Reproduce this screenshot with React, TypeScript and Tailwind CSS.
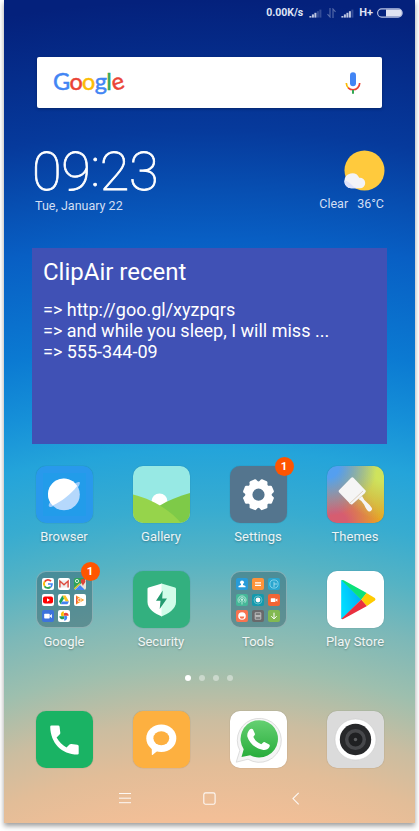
import type { ReactNode } from "react";

const BOX = "h-[57px] w-[57px] shrink-0 rounded-[10px] overflow-hidden shadow-[0_0_1px_rgba(0,0,0,0.35)]";

function Signal({ bright }: { bright: number }) {
  return (
    <svg width="13" height="9" viewBox="0 0 13 9" fill="#dfe4f5">
      {[0, 1, 2, 3, 4].map((i) => (
        <rect key={i} x={0.4 + i * 2.5} y={7 - i * 1.6} width="2" height={1.6 + i * 1.6} opacity={i < bright ? 0.85 : 0.22} />
      ))}
    </svg>
  );
}

function StatusBar() {
  return (
    <div className="flex h-[26px] items-center justify-end pr-[12px] text-[#dfe4f5]">
      <span className="mr-[6px] text-[10.5px] font-bold leading-[26px]">0.00K/s</span>
      <Signal bright={3} />
      <svg className="mx-[5px]" width="9" height="10" viewBox="0 0 9 10" fill="none" stroke="#dfe4f5" strokeWidth="1.1" opacity="0.38">
        <path d="M3 0v9L0.5 6.2M6 10V1l2.5 2.8" />
      </svg>
      <Signal bright={4} />
      <span className="ml-[5px] mr-[4px] text-[11px] font-bold leading-[26px]">H+</span>
      <svg width="26" height="10" viewBox="0 0 26 10">
        <rect x="0.6" y="0.9" width="24.6" height="8.2" rx="4.1" fill="none" stroke="#b9c3e4" strokeWidth="1.1" />
        <path d="M9 1.6h12.5a3.3 3.3 0 0 1 0 6.8H9z" fill="#dfe2f1" />
      </svg>
    </div>
  );
}

function SearchBar() {
  return (
    <div className="ml-[33px] mt-[31px] flex h-[51px] w-[345px] items-center justify-between rounded-[2px] bg-white pl-[16px] pr-[21px] shadow-[0_1px_3px_rgba(0,0,0,0.3)]">
      <div className="mb-[3px] flex h-[48px] items-center font-[Lato] text-[23.5px] font-normal leading-[48px] tracking-[-0.7px] [-webkit-text-stroke:0.5px_currentColor]">
        <span className="text-[#4285f4]">G</span>
        <span className="text-[#ea4335]">o</span>
        <span className="text-[#fbbc05]">o</span>
        <span className="text-[#4285f4]">g</span>
        <span className="text-[#34a853]">l</span>
        <span className="h-[20px] -rotate-[18deg] leading-[20px] text-[#ea4335]">e</span>
      </div>
      <svg width="16" height="22" viewBox="0 0 16 22" fill="none">
        <rect x="5" y="0.3" width="6" height="14" rx="3" fill="#4285f4" />
        <path d="M1.3 11c.1 2.3.9 4 2.3 5.2" stroke="#fbbc05" strokeWidth="1.7" />
        <path d="M3.2 15.8c2.7 2.6 7 2.6 9.5 0 1.3-1.3 2-2.8 2-4.8" stroke="#ea4335" strokeWidth="1.7" />
        <path d="M8 17.9v3.8" stroke="#34a853" strokeWidth="2" />
      </svg>
    </div>
  );
}

function ClockRow() {
  return (
    <div className="flex h-[140px] justify-between pl-[28px] pr-[30px] pt-[39px] text-white">
      <div className="flex flex-col">
        <div className="flex h-[49px] whitespace-nowrap text-[54px] font-thin leading-[49px] tracking-[-0.3px] [-webkit-text-stroke:0.8px_white]">
          <span>09</span>
          <span className="-mt-[4px]">:</span>
          <span>23</span>
        </div>
        <span className="ml-[3px] mt-px text-[12.5px] leading-[18px] text-[#d3dff3]">Tue, January 22</span>
      </div>
      <div className="flex flex-col items-end">
        <svg className="mt-[3px]" width="41" height="41" viewBox="0 0 41 41">
          <circle cx="20.5" cy="20.5" r="20" fill="#ffca3d" />
          <path d="M0.4 31a7.8 7.8 0 0 1 14.8-3.2 5.3 5.3 0 0 1 6 5.2 5.2 5.2 0 0 1-5.2 5.3H7A6.9 6.9 0 0 1 .4 31z" fill="#f3f3f7" />
          <path d="M.5 30.5a7 7 0 0 0 6.8 7.8h6.2C8 37.5 7 31.5.5 30.5z" fill="#dfe3fa" />
        </svg>
        <div className="mr-px mt-[4px] flex gap-[9px] text-[12.5px] leading-[18px] text-[#d3dff3]">
          <span>Clear</span>
          <span>36°C</span>
        </div>
      </div>
    </div>
  );
}

function ClipWidget() {
  return (
    <div className="ml-[28px] h-[196px] w-[355px] bg-[#4051b5] pl-[11px] pt-[10px] text-white">
      <h1 className="text-[24px] leading-[28px]">ClipAir recent</h1>
      <ul className="mt-[13px] text-[18px] leading-[21px]">
        <li>=&gt; http://goo.gl/xyzpqrs</li>
        <li>=&gt; and while you sleep, I will miss ...</li>
        <li>=&gt; 555-344-09</li>
      </ul>
    </div>
  );
}

function Shortcut({ label, badge, children }: { label?: string; badge?: string; children: ReactNode }) {
  return (
    <div className="relative flex w-[97px] flex-col items-center">
      {children}
      {label && (
        <span className="mt-[5px] whitespace-nowrap text-[13px] leading-[18px] text-white/90 [text-shadow:0_1px_2px_rgba(0,0,0,0.3)]">
          {label}
        </span>
      )}
      {badge && (
        <span className="absolute left-[65px] top-[-9px] flex h-[19px] w-[19px] items-center justify-center rounded-full bg-[#ff5500] text-[11.5px] font-bold leading-none text-white">
          {badge}
        </span>
      )}
    </div>
  );
}

function BrowserIcon() {
  return (
    <svg className={BOX} viewBox="0 0 57 57">
      <rect width="57" height="57" fill="#2999ec" />
      <rect x="7" y="7" width="43" height="43" fill="#229cea" />
      <path d="M14.5 35.5c-1.6 2.2-2.2 4-1.5 5 .6.9 2.6.5 5-.8zM39 17.5c2-1.2 4-1.8 4.7-1.2.8 1-.7 4-2.9 6.6z" fill="#9bcbfa" />
      <circle cx="28" cy="28.5" r="15.8" fill="#b5d8fc" />
      <path d="M16.700 39.500A15.800 15.800 0 1 1 41.200 19.900C34.500 28.500 26 35 16.700 39.500z" fill="#fff" />
    </svg>
  );
}

function GalleryIcon() {
  return (
    <svg className={BOX} viewBox="0 0 57 57">
      <rect width="57" height="57" fill="#97e9e4" />
      <circle cx="26.5" cy="35.5" r="8" fill="#fff" />
      <path d="M57 27C46 30 36 34 26 40v17h31z" fill="#7eca48" />
      <path d="M0 28.5C19 33 37 44 48 57H0z" fill="#96d44b" />
    </svg>
  );
}

function SettingsIcon() {
  return (
    <svg className={BOX} viewBox="0 0 57 57">
      <rect width="57" height="57" fill="#54758e" />
      <g transform="translate(28.5 28.7)">
        {[0, 1, 2, 3, 4, 5, 6, 7].map((i) => (
          <path key={i} transform={`rotate(${22.5 + i * 45})`} d="M-5.500-10l2-4.900q.3-.7 1-.7h5q.7 0 1 .7l2 4.900z" fill="#fff" />
        ))}
        <circle r="9.6" fill="none" stroke="#fff" strokeWidth="7" />
      </g>
    </svg>
  );
}

function ThemesIcon() {
  return (
    <div className={`${BOX} bg-[radial-gradient(circle_at_0%_0%,#549ff0_15%,transparent_62%),radial-gradient(circle_at_100%_12%,#cfe35c_12%,transparent_62%),radial-gradient(circle_at_15%_100%,#d65d70_15%,transparent_60%),linear-gradient(#c3a44c,#eaa51f)]`}>
      <svg width="57" height="57" viewBox="0 0 57 57" fill="#f5f5f5">
        <path d="M24.2 11.7q1.3-1 2.5.2L39 25l-1.2 2.2L25 38.400q-1.1.3-1.9-.6L12 26.300q-1-1.1.2-2.200z" />
        <path d="M31.500 33L35 30q2 4.500 5.500 7 2.700 2.200 4 4.500a2.500 2.500 0 0 1-4.200 2.800Q38.500 42 37 38.500 35.500 35 31.500 33z" />
        <path d="M22.5 37.600L36 25" stroke="#dccfbe" strokeWidth="1" />
      </svg>
    </div>
  );
}

function Mini({ bg, children }: { bg: string; children: ReactNode }) {
  return (
    <svg className="h-[12px] w-[12px] rounded-[2px]" viewBox="0 0 12 12" fill="none">
      <rect width="12" height="12" fill={bg} />
      {children}
    </svg>
  );
}

function Folder({ children }: { children: ReactNode }) {
  return (
    <div className="grid h-[57px] w-[57px] shrink-0 grid-cols-[12px_12px_12px] grid-rows-[12px_12px_12px] gap-[4px] rounded-[10px] border border-white/30 bg-[#3b666e]/50 pl-[5px] pt-[6px]">
      {children}
    </div>
  );
}

function GoogleFolder() {
  return (
    <Folder>
      <Mini bg="#fff">
        <path d="M2.6 3.7A4 4 0 0 1 9 3.2" stroke="#ea4335" strokeWidth="1.8" />
        <path d="M2.6 8.1a4.2 4.2 0 0 1 0-4.5" stroke="#fbbc05" strokeWidth="1.8" />
        <path d="M2.5 8.2a4 4 0 0 0 6 .8" stroke="#34a853" strokeWidth="1.8" />
        <path d="M6 6h4q0 2-1.4 3.2" stroke="#4285f4" strokeWidth="1.7" />
      </Mini>
      <Mini bg="#fff">
        <rect x="1.5" y="2.5" width="9" height="7" fill="#eee" />
        <path d="M1.9 9.5V3l4.1 3.8L10.1 3v6.5" stroke="#dd4b3e" strokeWidth="1.4" />
      </Mini>
      <Mini bg="#2ea35a">
        <path d="M0 12L12 1v11z" fill="#e9e4d8" />
        <path d="M1 12l5-5 5 5z" fill="#4285f4" />
        <path d="M0 11l6-5.500" stroke="#f4c734" strokeWidth="1.2" />
        <circle cx="3" cy="3" r="1.6" stroke="#fff" strokeWidth=".8" />
        <path d="M9 8C8 5 6.800 5 6.800 3a2.300 2.300 0 0 1 4.600 0C11.400 5 10 5 9 8z" fill="#dc4437" />
      </Mini>
      <Mini bg="#fff">
        <rect x="1" y="2.4" width="10" height="7.2" rx="2" fill="#f00" />
        <path d="M5 4.3v3.4L8 6z" fill="#fff" />
      </Mini>
      <Mini bg="#fff">
        <path d="M4.3 1.5h3.2L11 7.5H7.700z" fill="#fbc322" />
        <path d="M4.3 1.5L6 4.5 2.600 10.200 1 7.500z" fill="#17a261" />
        <path d="M4.3 7.5H11l-1.6 2.800H2.600z" fill="#4382f1" />
      </Mini>
      <Mini bg="#fff">
        <path d="M2 1.5l8.3 4.4L2 10.6z" fill="#fb9b25" />
        <path d="M2 1.5l2.3 4.4L2 10.6z" fill="#f05537" />
        <circle cx="5.4" cy="6" r="1.7" stroke="#fff" strokeWidth=".8" />
      </Mini>
      <Mini bg="#3d73dc">
        <rect x="2.2" y="3.7" width="5.5" height="4.8" rx=".7" fill="#fff" />
        <path d="M7.5 6l2.4-2v4.3z" fill="#fff" />
      </Mini>
      <Mini bg="#fff">
        <path d="M5.8 6V1.3a3 3 0 0 0-2.4 4.7z" fill="#fbbc05" />
        <path d="M6 5.8h4.7A3 3 0 0 0 6 3.3z" fill="#ea4335" />
        <path d="M6.2 6v4.7A3 3 0 0 0 8.700 6z" fill="#4285f4" />
        <path d="M6 6.2H1.3A3 3 0 0 0 6 8.7z" fill="#249b57" />
      </Mini>
    </Folder>
  );
}

function ToolsFolder() {
  return (
    <Folder>
      <Mini bg="#289bd9">
        <circle cx="6" cy="4.3" r="1.9" fill="#fff" />
        <path d="M5 5h2v2l2.5 1v1.3h-7V8L5 7z" fill="#fff" />
      </Mini>
      <Mini bg="#ff933a">
        <path d="M3 4.8h6M3 7.4h6" stroke="#fff" strokeWidth="1.2" />
      </Mini>
      <Mini bg="#2aa6cf">
        <circle cx="6" cy="6" r="4.1" stroke="#93dcf2" strokeWidth=".8" />
        <path d="M6 3.8V6h3M6 6v3" stroke="#c3ecf7" strokeWidth=".7" />
      </Mini>
      <Mini bg="#46b899">
        <path d="M3.3 8.9a4 4 0 1 1 5.5-.1M4.5 8a2.5 2.5 0 1 1 3.2-.1M6 6v4.5" stroke="#c9f0e3" strokeWidth=".8" />
        <circle cx="6" cy="5.7" r="1.1" fill="#c9f0e3" />
      </Mini>
      <Mini bg="#139aad">
        <circle cx="6" cy="6" r="4" stroke="#85cbd3" strokeWidth=".7" />
        <circle cx="6" cy="6" r="2.4" fill="#fff" />
      </Mini>
      <Mini bg="#f46534">
        <rect x="2.8" y="4.2" width="4.6" height="3.7" rx=".5" fill="#fff" />
        <path d="M7.2 6l2.2-1.6v3.300z" fill="#fff" />
      </Mini>
      <Mini bg="#f87350">
        <circle cx="6" cy="6" r="3.8" fill="#fff" />
        <path d="M3.7 6.5h4.6a2.3 2.3 0 0 1-4.6 0z" fill="#f87350" />
      </Mini>
      <Mini bg="#68696b">
        <path d="M3.2 2.8h5.6v2.5H3.200zM3.200 6.800h5.600v2.400H3.200zM2.500 6h7" stroke="#ddd" strokeWidth=".7" />
      </Mini>
      <Mini bg="#82b951">
        <path d="M6 2.7v6M3.3 6.2L6 8.9l2.7-2.7" stroke="#fff" strokeWidth="1" />
      </Mini>
    </Folder>
  );
}

function SecurityIcon() {
  return (
    <svg className={BOX} viewBox="0 0 57 57">
      <rect width="57" height="57" fill="#33b07f" />
      <path d="M29 12.5L15.600 16.600q-1.100.4-1.100 1.500V31c0 7 7 11.500 14.500 14.500z" fill="#fff" />
      <path d="M28.500 12.500L42 16.600q1 .4 1 1.500V31c0 7-7.500 11.500-14.500 14.500z" fill="#d1fce9" />
      <path d="M29.7 19.5L23 29.800h4.500l-.8 8.200L34 27.500h-4.800z" fill="#249b70" />
    </svg>
  );
}

function PlayIcon() {
  return (
    <svg className={BOX} viewBox="0 0 57 57">
      <defs>
        <linearGradient id="playBlue" x1="1" y1="0" x2="0" y2="0.5">
          <stop offset="0" stopColor="#00a5f5" />
          <stop offset="1" stopColor="#00dcff" />
        </linearGradient>
      </defs>
      <rect width="57" height="57" fill="#fff" />
      <path d="M14.2 9.5v38q0 .7.5.5L34.300 28.600 14.800 9z" fill="url(#playBlue)" />
      <path d="M14.5 9.3q.9-.8 2.200 0l23 12.700-5.500 6.700z" fill="#0be17a" />
      <path d="M14.5 47.8q.9.8 2.200 0L40 35l-5.700-6.400z" fill="#e9303f" />
      <path d="M39.5 22l8.300 4.900q1.500 1.200 0 2.600L40 35l-5.800-6.400z" fill="#ffcb02" />
    </svg>
  );
}

function PhoneIcon() {
  return (
    <svg className={BOX} viewBox="0 0 57 57">
      <rect width="57" height="57" fill="#1ab364" />
      <path d="M15.500 14.500h6.700q1.200 0 1.400 1.200l.7 6q.1 1.100-.7 1.900L20.600 26.500c2.400 4.400 5.700 7.600 9.900 10.100l3-3q.8-.8 1.900-.6l5.900.7q1.400.2 1.400 1.500v7.300q0 1.100-1.200 1.100C25.500 43.500 14.500 32 14.200 15.800q0-1.300 1.300-1.300z" fill="#fff" />
    </svg>
  );
}

function MessageIcon() {
  return (
    <svg className={BOX} viewBox="0 0 57 57">
      <rect width="57" height="57" fill="#fdb040" />
      <ellipse cx="28.300" cy="27.300" rx="15" ry="13.800" fill="#fff" />
      <path d="M17.500 34l1.300 4.500v5q.1 1 1 .3l6-5z" fill="#fff" />
      <ellipse cx="28.300" cy="27.300" rx="7.900" ry="7" fill="#fdb040" />
    </svg>
  );
}

function WhatsAppIcon() {
  return (
    <svg className={BOX} viewBox="0 0 57 57">
      <defs>
        <linearGradient id="waGreen" x1="0" y1="0" x2="0" y2="1">
          <stop offset="0" stopColor="#65d072" />
          <stop offset="1" stopColor="#28ad3b" />
        </linearGradient>
      </defs>
      <rect width="57" height="57" fill="#fff" />
      <path d="M6.200 51.200l3.600-11.700A22 22 0 1 1 18 48.200z" fill="#f5f5f5" stroke="#d6d6d6" strokeWidth=".8" />
      <path d="M11.500 46l2.200-7.800a18.700 18.700 0 1 1 6.500 6z" fill="url(#waGreen)" />
      <path d="M20 18.300c1-1 2.600-.8 3 .2l1.900 4.300c.5 1.200-1.800 2.600-1.500 3.300 1.500 3.200 4.300 5.700 7.500 7 1.100.4 2.400-2.600 3.500-2.100l4.800 2.400c.8.500.7 1.400.2 2.600-1 2.200-3.800 3.200-6 2.900-8.500-1.400-14.200-7.200-16-13.200-.6-2.700.8-5.700 2.600-7.400z" fill="#fff" />
    </svg>
  );
}

function CameraIcon() {
  return (
    <svg className={BOX} viewBox="0 0 57 57">
      <rect width="57" height="57" fill="#dbdbdb" />
      <circle cx="28.5" cy="28.5" r="20.5" fill="#fff" stroke="#cfcfcf" strokeWidth=".6" />
      <circle cx="28.5" cy="28.5" r="15.7" fill="#27282a" />
      <circle cx="28.5" cy="28.5" r="8.8" fill="#1f2022" stroke="#47484b" strokeWidth="3.5" />
      <circle cx="28.5" cy="28.5" r="1.7" fill="#5b5c5e" />
    </svg>
  );
}

function NavBar() {
  return (
    <div className="mt-[22px] flex h-[16px] items-center pl-[115px] text-white/90">
      <svg width="12" height="12" viewBox="0 0 12 12" stroke="currentColor" strokeWidth="1">
        <path d="M0 1.5h12M0 6.2h12M0 10.7h12" />
      </svg>
      <svg className="ml-[72px]" width="13" height="13" viewBox="0 0 13 13" fill="none" stroke="currentColor" strokeWidth="1.1">
        <rect x="0.8" y="0.9" width="11.3" height="11.3" rx="1.8" />
      </svg>
      <svg className="ml-[76px]" width="8" height="13" viewBox="0 0 8 13" fill="none" stroke="currentColor" strokeWidth="1.1">
        <path d="M6.7 0.9L1 6.6l5.7 5.7" />
      </svg>
    </div>
  );
}

export default function App() {
  return (
    <div className="h-[831px] w-[419px] overflow-hidden bg-white pl-[4px] font-[Roboto,sans-serif]">
      <main className="flex h-[823px] w-[411px] flex-col bg-[radial-gradient(circle_at_50%_1300px,#f3bf97_480px,#e2bd98_535px,#cbbda0_580px,#9dbfae_635px,#7cb8b8_690px,#55b3c4_740px,#38acd0_790px,#24a4da_850px,#1690d8_900px,#0b7ad2_960px,#085fc4_1060px,#074fb2_1110px,#063a9c_1170px,#04217c_1300px)] shadow-[0_3px_5px_rgba(0,0,0,0.38)]">
        <StatusBar />
        <SearchBar />
        <ClockRow />
        <ClipWidget />
        <div className="ml-[11.5px] mt-[22px] flex h-[105px]">
          <Shortcut label="Browser"><BrowserIcon /></Shortcut>
          <Shortcut label="Gallery"><GalleryIcon /></Shortcut>
          <Shortcut label="Settings" badge="1"><SettingsIcon /></Shortcut>
          <Shortcut label="Themes"><ThemesIcon /></Shortcut>
        </div>
        <div className="ml-[11.5px] flex h-[104px]">
          <Shortcut label="Google" badge="1"><GoogleFolder /></Shortcut>
          <Shortcut label="Security"><SecurityIcon /></Shortcut>
          <Shortcut label="Tools"><ToolsFolder /></Shortcut>
          <Shortcut label="Play Store"><PlayIcon /></Shortcut>
        </div>
        <div className="flex h-[6px] gap-[8px] pl-[181px]">
          <i className="h-[6px] w-[6px] rounded-full bg-white" />
          <i className="h-[6px] w-[6px] rounded-full bg-white/40" />
          <i className="h-[6px] w-[6px] rounded-full bg-white/40" />
          <i className="h-[6px] w-[6px] rounded-full bg-white/40" />
        </div>
        <div className="ml-[11.5px] mt-[30px] flex h-[57px]">
          <Shortcut><PhoneIcon /></Shortcut>
          <Shortcut><MessageIcon /></Shortcut>
          <Shortcut><WhatsAppIcon /></Shortcut>
          <Shortcut><CameraIcon /></Shortcut>
        </div>
        <NavBar />
      </main>
    </div>
  );
}
